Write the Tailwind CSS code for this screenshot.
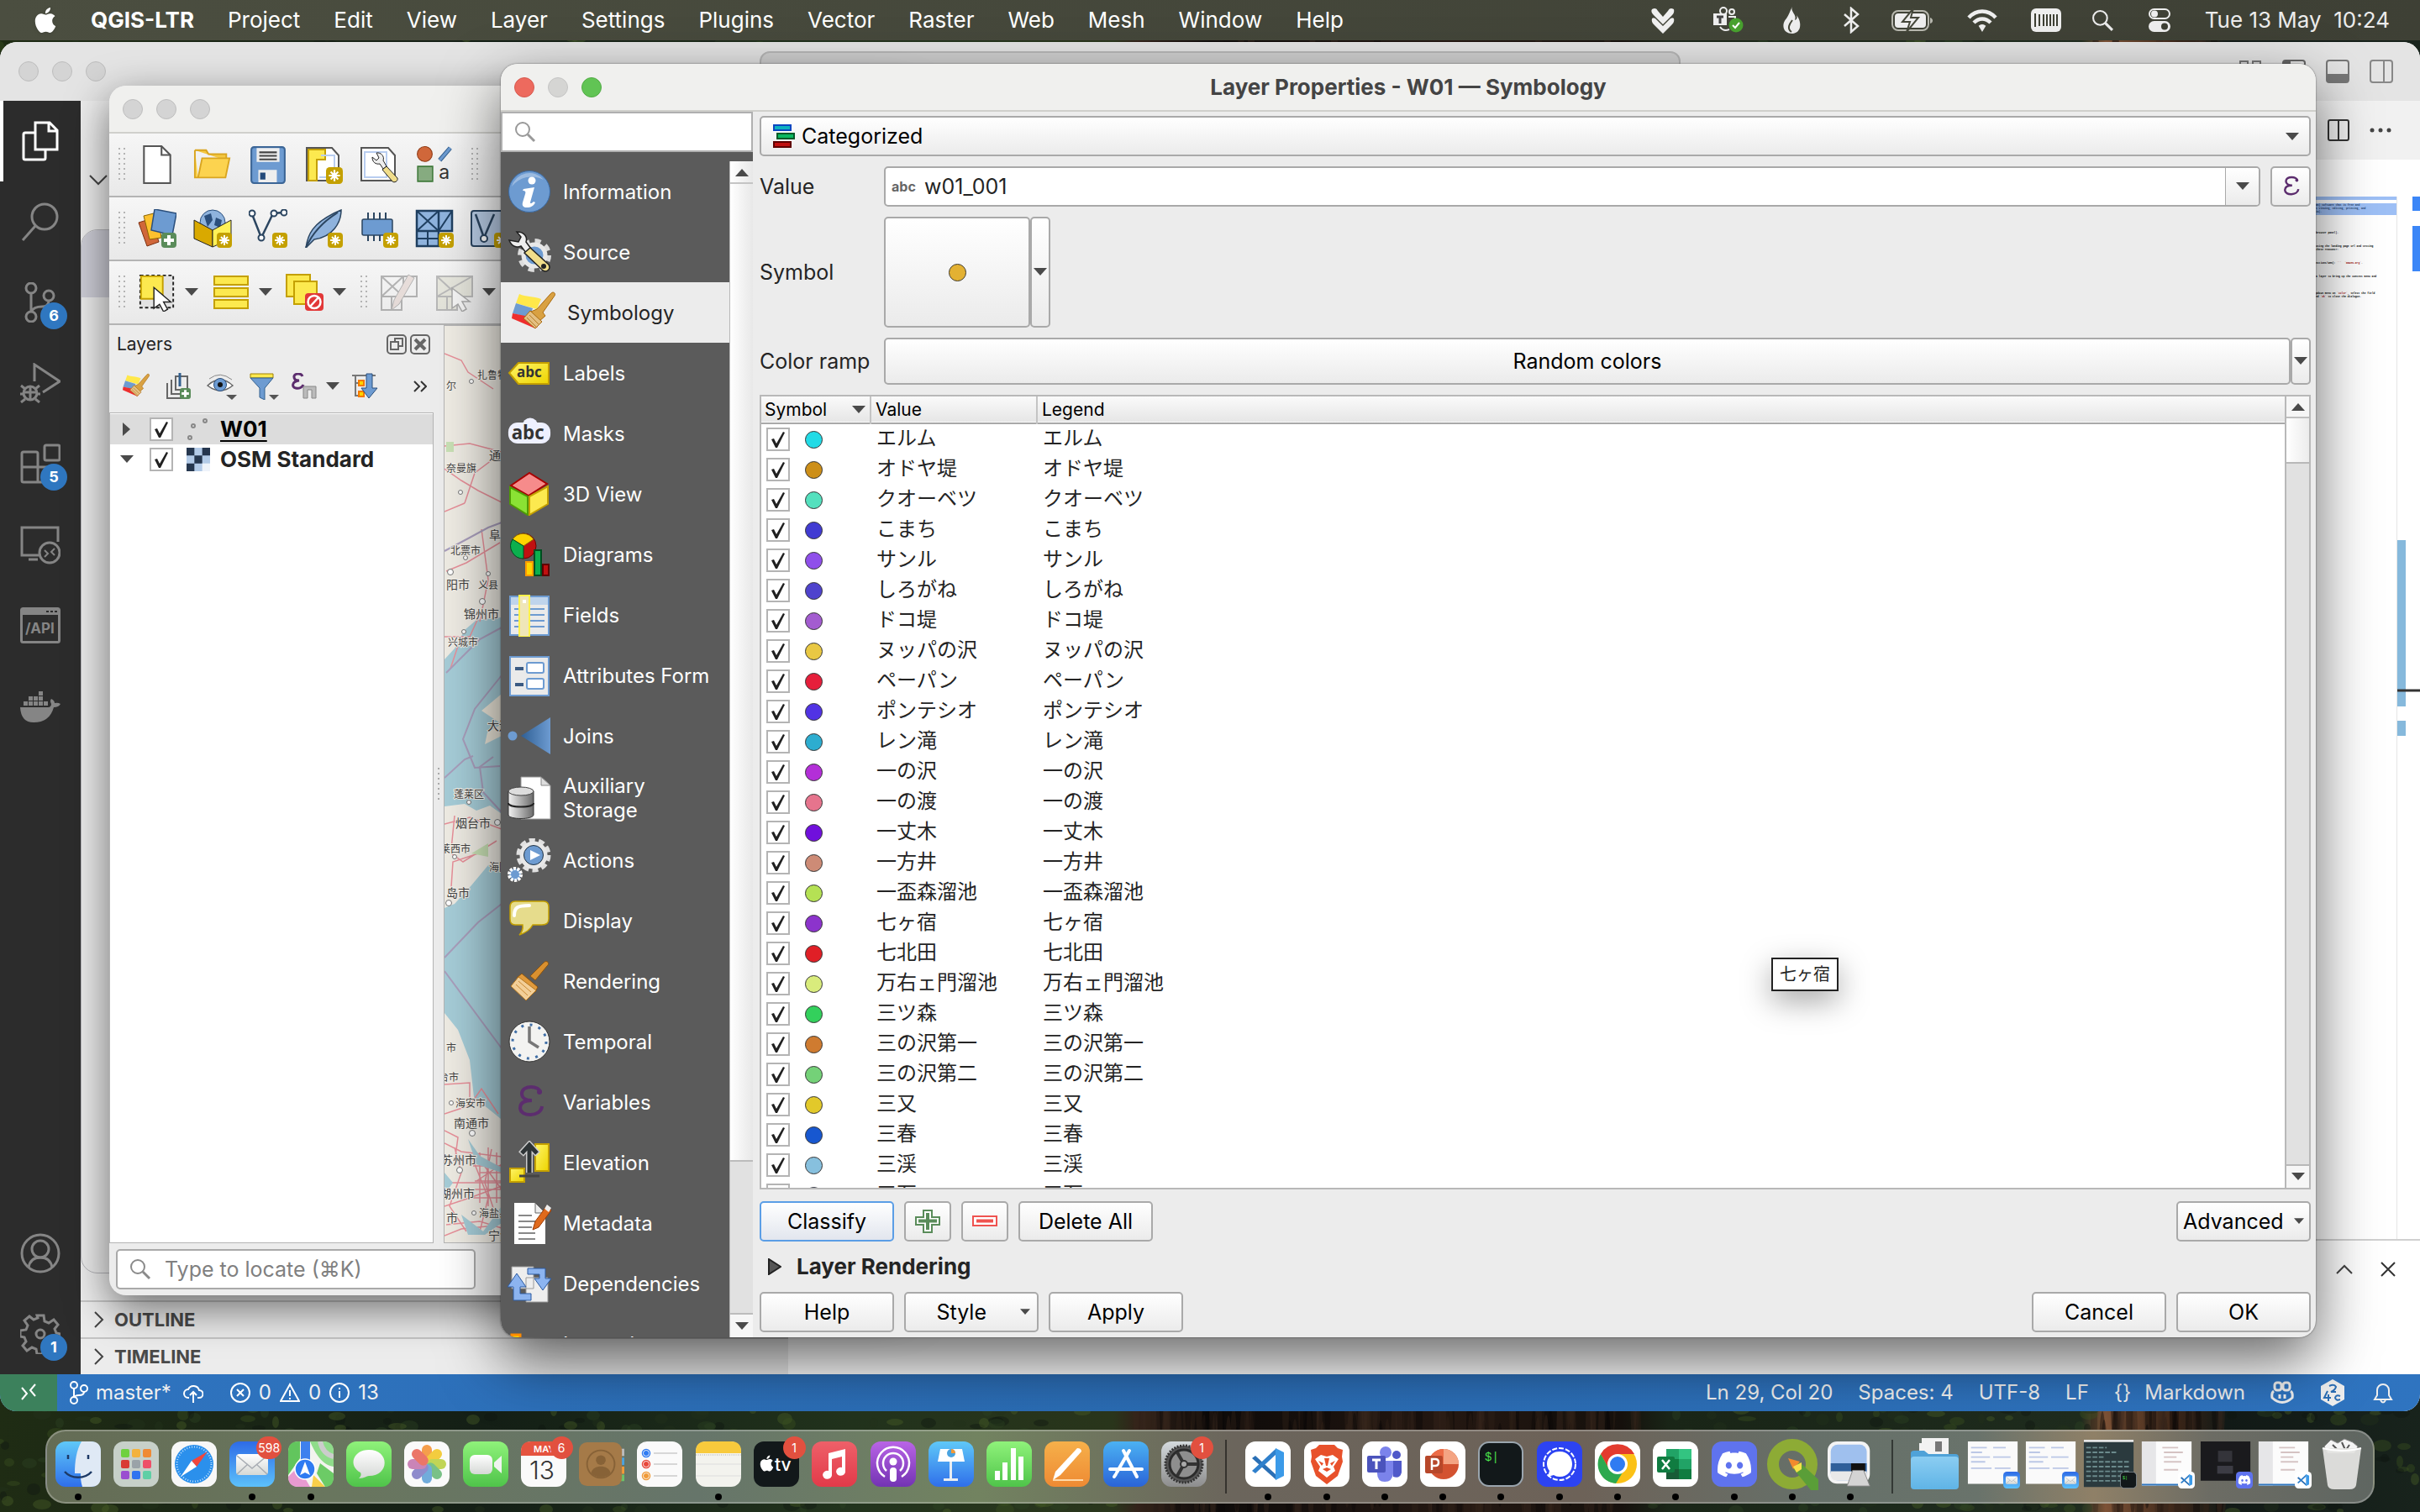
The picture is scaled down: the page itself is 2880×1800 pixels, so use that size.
<!DOCTYPE html>
<html lang="en">
<head>
<meta charset="utf-8">
<title>Layer Properties - W01 — Symbology</title>
<script src="https://cdn.jsdelivr.net/npm/@tailwindcss/browser@4"></script>
</head>
<body class="h-screen overflow-hidden bg-[#141c15] font-['Inter','Noto_Sans_CJK_JP',sans-serif] text-[25px] leading-8 text-[#242424]">

<!-- shared icon symbols -->
<svg class="absolute size-0" aria-hidden="true">
  <defs>
    <linearGradient id="g-blue" x1="0" y1="0" x2="1" y2="0"><stop offset="0" stop-color="#2f5f94"/><stop offset="1" stop-color="#6d9bd1"/></linearGradient>
    <linearGradient id="g-yel" x1="0" y1="0" x2="1" y2="1"><stop offset="0" stop-color="#fff568"/><stop offset="1" stop-color="#edd400"/></linearGradient>
    <linearGradient id="g-metal" x1="0" y1="0" x2="1" y2="0"><stop offset="0" stop-color="#f2f2f2"/><stop offset="1" stop-color="#6a6a6a"/></linearGradient>
    <linearGradient id="g-finder" x1="0" y1="0" x2="0" y2="1"><stop offset="0" stop-color="#5fc8f8"/><stop offset="1" stop-color="#2f6fea"/></linearGradient>
    <linearGradient id="g-mail" x1="0" y1="0" x2="0" y2="1"><stop offset="0" stop-color="#2e6be6"/><stop offset="1" stop-color="#5cc1fb"/></linearGradient>
    <linearGradient id="g-green" x1="0" y1="0" x2="0" y2="1"><stop offset="0" stop-color="#8ff27a"/><stop offset="1" stop-color="#4fc44a"/></linearGradient>
    <linearGradient id="g-red" x1="0" y1="0" x2="0" y2="1"><stop offset="0" stop-color="#ee6069"/><stop offset="1" stop-color="#e23a49"/></linearGradient>
    <linearGradient id="g-purple" x1="0" y1="0" x2="0" y2="1"><stop offset="0" stop-color="#b964e6"/><stop offset="1" stop-color="#7333b3"/></linearGradient>
    <linearGradient id="g-orange" x1="0" y1="0" x2="0" y2="1"><stop offset="0" stop-color="#f6b04a"/><stop offset="1" stop-color="#ee8a33"/></linearGradient>
    <linearGradient id="g-store" x1="0" y1="0" x2="0" y2="1"><stop offset="0" stop-color="#4bb1f3"/><stop offset="1" stop-color="#2a64d8"/></linearGradient>
    <linearGradient id="g-gray" x1="0" y1="0" x2="0" y2="1"><stop offset="0" stop-color="#d4dadd"/><stop offset="1" stop-color="#8d8d8d"/></linearGradient>
    <linearGradient id="g-white" x1="0" y1="0" x2="0" y2="1"><stop offset="0" stop-color="#ffffff"/><stop offset="1" stop-color="#d5d8d5"/></linearGradient>
    <linearGradient id="g-folder" x1="0" y1="0" x2="0" y2="1"><stop offset="0" stop-color="#8bcdf2"/><stop offset="1" stop-color="#5fb4e6"/></linearGradient>
  </defs>

  <symbol id="tri" viewBox="0 0 16 10"><path d="M0 0h16L8 9z" fill="#4a4a4a"/></symbol>
  <symbol id="check" viewBox="0 0 28 28"><path d="M6 14l3-1 3 6 8-14 2 1-9 18h-2z" fill="#202020"/></symbol>
  <symbol id="mag" viewBox="0 0 26 26"><circle cx="10" cy="10" r="8" fill="none" stroke="currentColor" stroke-width="2"/><path d="M16 16l8 8" stroke="currentColor" stroke-width="3"/></symbol>
  <symbol id="star" viewBox="0 0 18 18"><rect width="18" height="18" rx="4" fill="#c4a000"/><path d="M9 3v12M3 9h12M5 5l8 8M13 5l-8 8" stroke="#fff" stroke-width="2"/></symbol>
  <symbol id="plus" viewBox="0 0 18 18"><rect width="18" height="18" rx="4" fill="#5a8c5a"/><path d="M9 3v12M3 9h12" stroke="#fff" stroke-width="4"/></symbol>

  <!-- navigation icons -->
  <symbol id="n-info" viewBox="0 0 52 52"><circle cx="26" cy="26" r="24.500" fill="#6d9bd1" stroke="#3b6ba5"/><path d="M5 20a22 22 0 0 1 38-8A30 30 0 0 0 5 20z" fill="#9cbbe0"/><circle cx="29" cy="13" r="4.500" fill="#fff"/><path d="M19 23l13-2-5 18c0 2 2 1 4-1l2 1c-2 4-5 6-10 6-4 0-6-2-5-6l3-10c1-3 0-4-3-4z" fill="#fff"/></symbol>
  <symbol id="n-source" viewBox="0 0 52 52"><circle cx="32" cy="30" r="17" fill="none" stroke="#dcdcdc" stroke-width="6" stroke-dasharray="7 6.350"/><circle cx="32" cy="30" r="13" fill="#6d9bd1" stroke="#e8e8e8" stroke-width="5"/><path d="M2 12c3 8 9 9 14 7l6 8 6-5-6-8c2-6-2-12-11-12l5 6-3 6z" fill="#eee" stroke="#222" stroke-width="1.500"/><path d="M20 27l7-6 22 20c3 5-2 10-7 7z" fill="#f0dd8a" stroke="#222" stroke-width="1.500"/><circle cx="43" cy="43" r="3" fill="#222"/></symbol>
  <symbol id="n-sym" viewBox="0 0 52 52"><path d="M9 4c8 4 16 2 26 6l-5 12L5 15z" fill="#ffe84a"/><path d="M5 15l20 6-4 11-20-5z" fill="#6d9bd1"/><path d="M1 27l20 4 10 12-3 2L0 33z" fill="#ee2e2e"/><path d="M30 22L46 4c3-4 7-1 5 2L37 26l3 4-8 7-9-12z" fill="#d9a142" stroke="#a86a10"/><path d="M22 24l14 13-8 8L14 33z" fill="#e3bf82" stroke="#a86a10"/><path d="M18 32l11 11M21 29l11 11" stroke="#a86a10" stroke-width=".8"/></symbol>
  <symbol id="n-label" viewBox="0 0 52 52"><path d="M2 26l11-12h36v25H13z" fill="url(#g-yel)" stroke="#c4a000" stroke-width="2"/><text x="11" y="31" font-size="17" font-weight="700" fill="#333" font-family="Open Sans">abc</text></symbol>
  <symbol id="n-mask" viewBox="0 0 56 52"><rect x="1" y="12" width="54" height="27" rx="12" fill="#eef0ff"/><circle cx="29" cy="16" r="10" fill="#eef0ff"/><text x="5" y="34" font-size="24" font-weight="700" fill="#333" font-family="Open Sans">abc</text></symbol>
  <symbol id="n-3d" viewBox="0 0 52 52"><path d="M4 16L26 1l21 13-22 14z" fill="#f68b8b" stroke="#a80000" stroke-width="2"/><path d="M3 18l21 11v22L3 38z" fill="#8ae234" stroke="#4e9a06" stroke-width="2"/><path d="M48 17L26 29v22l22-13z" fill="#fce94f" stroke="#c4a000" stroke-width="2"/></symbol>
  <symbol id="n-diag" viewBox="0 0 52 52"><circle cx="19" cy="16" r="15" fill="#c01010" stroke="#700000"/><path d="M19 16L6 8a15 15 0 0 1 25 0z" fill="#ffd400" stroke="#8a6a00"/><path d="M19 16L6 8a15 15 0 0 0 13 23z" fill="#0cb04e" stroke="#004d20"/><path d="M22 35h8v16h-8z" fill="#ffd400" stroke="#ff9a00" stroke-width="2"/><path d="M32 21h8v30h-8z" fill="#0cb04e" stroke="#004d20" stroke-width="2"/><path d="M42 38h7v13h-7z" fill="#c01010" stroke="#600000" stroke-width="2"/></symbol>
  <symbol id="n-fields" viewBox="0 0 52 52"><path d="M3 4h46v46H3z" fill="#eaeaea" stroke="#6d9bd1" stroke-width="2"/><path d="M4 5h44v9H4z" fill="#bfd4ec"/><path d="M8 19h36M8 26h36M8 33h36M8 40h36" stroke="#6d9bd1" stroke-width="2"/><path d="M14 3h12v49H14z" fill="#efe6b8" stroke="#fff24a" stroke-width="2"/><path d="M18 8h4v4h-4z" fill="#fff"/></symbol>
  <symbol id="n-form" viewBox="0 0 52 52"><path d="M3 4h46v46H3z" fill="#eaeaea" stroke="#6d9bd1" stroke-width="2"/><path d="M9 18h10M9 37h10" stroke="#3b5a82" stroke-width="4"/><rect x="23" y="11" width="20" height="12" rx="2" fill="#fff" stroke="#6d9bd1" stroke-width="2"/><rect x="23" y="30" width="20" height="12" rx="2" fill="#fff" stroke="#6d9bd1" stroke-width="2"/></symbol>
  <symbol id="n-join" viewBox="0 0 52 52"><circle cx="6" cy="26" r="5.500" fill="#6d9bd1"/><path d="M16 26L51 4v44z" fill="url(#g-blue)"/></symbol>
  <symbol id="n-aux" viewBox="0 0 52 52"><path d="M16 1h24l11 10v40H16z" fill="#fff" stroke="#999"/><path d="M40 1v10h11z" fill="#ddd" stroke="#888"/><path d="M1 18v28c0 6 30 6 30 0V18z" fill="url(#g-metal)" stroke="#333"/><ellipse cx="16" cy="18" rx="15" ry="5" fill="#ddd" stroke="#444"/><path d="M1 32c0 6 30 6 30 0" fill="none" stroke="#222" stroke-width="2"/></symbol>
  <symbol id="n-act" viewBox="0 0 52 52"><circle cx="31" cy="20" r="18" fill="none" stroke="#e0e0e0" stroke-width="5" stroke-dasharray="7 4.300"/><circle cx="31" cy="20" r="14" fill="#6d9bd1" stroke="#e8e8e8" stroke-width="5"/><circle cx="31" cy="20" r="11.500" fill="none" stroke="#234"/><path d="M27 14l12 6-12 6z" fill="#fff"/><circle cx="9" cy="43" r="7" fill="#6d9bd1" stroke="#fff" stroke-width="4" stroke-dasharray="3 1.400"/></symbol>
  <symbol id="n-disp" viewBox="0 0 52 52"><path d="M9 3h34q6 0 6 7v14q0 7-8 7H30q-4 8-16 12 5-5 4-12H9q-6 0-6-7V10q0-7 6-7z" fill="#e6dc8c" stroke="#c4a000" stroke-width="1.500"/><path d="M8 20c0-10 4-12 18-12" fill="none" stroke="#fff" stroke-width="4" stroke-linecap="round"/></symbol>
  <symbol id="n-rend" viewBox="0 0 52 52"><path d="M27 20L43 4c4-4 8 1 4 4L33 25z" fill="#d9902f" stroke="#8a5410"/><path d="M17 17l19 16-3 6-22-17z" fill="#e09a3c" stroke="#8a5410"/><path d="M13 21l21 16-12 12L4 32z" fill="#f3cf98" stroke="#b57720"/><path d="M10 30l14 13M13 26l15 13" stroke="#c98a35"/></symbol>
  <symbol id="n-temp" viewBox="0 0 52 52"><circle cx="26" cy="26" r="24" fill="#f3f3f1" stroke="#333"/><circle cx="26" cy="26" r="20" fill="none" stroke="#3f6ea6" stroke-width="3" stroke-dasharray="3 7.470"/><path d="M26 8v18l11 7" fill="none" stroke="#777" stroke-width="3.500"/></symbol>
  <symbol id="n-var" viewBox="0 0 52 52"><path d="M39 15c0-9-22-10-22 1 0 5 5 8 12 8-9 0-14 3-14 9 0 11 25 11 26-2" fill="none" stroke="#5c2d6e" stroke-width="4"/><circle cx="38" cy="14" r="3" fill="#5c2d6e"/></symbol>
  <symbol id="n-elev" viewBox="0 0 52 52"><path d="M3 33h17v16H3z" fill="url(#g-yel)" stroke="#c4a000" stroke-width="2"/><path d="M33 4h16v32H33z" fill="url(#g-yel)" stroke="#c4a000" stroke-width="2"/><path d="M26 38V8M16 16L26 5l10 11" fill="none" stroke="#ccc" stroke-width="8"/><path d="M26 38V8M17 15L26 5l9 10" fill="none" stroke="#2e3436" stroke-width="5"/><path d="M14 42h24" stroke="#444" stroke-width="3"/></symbol>
  <symbol id="n-meta" viewBox="0 0 52 52"><path d="M8 2h25l12 12v37H8z" fill="#fff"/><path d="M33 2v12h12z" fill="#eee" stroke="#666"/><path d="M13 17h16M13 24h20M13 31h16M13 38h20M13 45h20" stroke="#888" stroke-width="2"/><path d="M30 34l3-10L47 5l5 6-15 20z" fill="#e06a1c" stroke="#9a3c06"/><path d="M44 9l3-5 5 4-3 5z" fill="#eee"/></symbol>
  <symbol id="n-dep" viewBox="0 0 52 52"><path d="M5 6h26v26H5zM22 19h26v29H22z" fill="#eee" stroke="#999"/><path d="M24 8h21v12h7L42 34 32 20h6v-5H24z" fill="#8cb4f0" stroke="#2c5aa0"/><path d="M28 46H7V30H0l11-16 11 16h-7v8h13z" fill="#8cb4f0" stroke="#2c5aa0"/></symbol>
  <symbol id="n-leg" viewBox="0 0 52 52"><path d="M5 15h10v12H5z" fill="#ffd400" stroke="#ff8c00" stroke-width="3"/><path d="M20 22h14" stroke="#999" stroke-width="8"/></symbol>

  <!-- toolbar icons -->
  <symbol id="t-new" viewBox="0 0 44 44"><path d="M7 1h20l10 10v32H7z" fill="#fff" stroke="#555" stroke-width="2"/><path d="M27 1v10h10" fill="none" stroke="#555" stroke-width="2"/></symbol>
  <symbol id="t-open" viewBox="0 0 48 44"><path d="M2 4h14l3 5h22v8" fill="#f5c842" stroke="#d9a520" stroke-width="2"/><path d="M2 4v34h38l5-24H11L6 38" fill="#fcd34f" stroke="#d9a520" stroke-width="2"/></symbol>
  <symbol id="t-save" viewBox="0 0 44 44"><rect x="3" y="2" width="38" height="41" rx="3" fill="#6d9bd1" stroke="#3b6596" stroke-width="2"/><path d="M9 3h26v16H9z" fill="#eee"/><path d="M12 8h20M12 12h20M12 16h20" stroke="#444" stroke-width="2"/><path d="M11 28h21v14H11z" fill="#eee"/><path d="M13 31h6v8h-6z" fill="#244a7a"/></symbol>
  <symbol id="t-layout" viewBox="0 0 46 46"><path d="M3 3h30l8 9v30H3z" fill="#fff" stroke="#555" stroke-width="2"/><path d="M5 5h20v12H15v25H5z" fill="#fce94f" stroke="#c4a000" stroke-width="2"/><path d="M20 12h16v26H18" fill="none" stroke="#b8cdf0" stroke-width="2"/><use href="#star" x="26" y="26" width="20" height="20"/></symbol>
  <symbol id="t-tool" viewBox="0 0 46 46"><path d="M2 3h32l8 9v30H2z" fill="#fff" stroke="#555" stroke-width="2"/><path d="M6 8h26v30H6z" fill="none" stroke="#b8cdf0" stroke-width="2"/><path d="M15 14c0 6 4 9 9 8l4 6 4-3-4-7c2-5-3-10-8-9l3 6-3 3z" fill="#eee" stroke="#222"/><path d="M27 29l5-4 13 14c1 4-4 6-6 4z" fill="#f0dd8a" stroke="#222"/></symbol>
  <symbol id="t-symb" viewBox="0 0 44 44"><circle cx="11" cy="10" r="8.500" fill="#d0673a" stroke="#8f3a14"/><path d="M28 17L40 3" stroke="#33608f" stroke-width="5"/><path d="M28 17L40 3" stroke="#6d9bd1" stroke-width="3"/><path d="M3 24h17v17H3z" fill="#86ab80" stroke="#3f7a3a" stroke-width="1.500"/><text x="27" y="38" font-size="22" fill="#333" font-family="Inter">a</text></symbol>
  <symbol id="t-layers" viewBox="0 0 46 46"><path d="M1 16l16-5 8 28-14 5z" fill="#d0673a" stroke="#7c3010"/><path d="M7 8l16-4 5 30-14 2z" fill="#fcc12f" stroke="#8a6400"/><path d="M20 0l26 5-5 26-25-6z" fill="#6d9bd1" stroke="#2b4f7c" stroke-width="1.500"/><use href="#plus" x="28" y="28" width="18" height="18"/></symbol>
  <symbol id="t-globe" viewBox="0 0 46 46"><circle cx="23" cy="16" r="15" fill="#8fb3dd" stroke="#2b4f7c"/><path d="M13 8l8-3 2 8-6 8zM27 10l7 3-2 9-7-3z" fill="#2b4f7c"/><path d="M1 13l22 12v20L1 35z" fill="#d9a900" stroke="#222"/><path d="M45 13L23 25v20l22-10z" fill="#fff157" stroke="#222"/><use href="#star" x="28" y="28" width="18" height="18"/></symbol>
  <symbol id="t-vec" viewBox="0 0 46 46"><path d="M4 6l11 28L29 5l12-1" fill="none" stroke="#2b4560" stroke-width="2.500"/><g fill="#fff" stroke="#2b4560" stroke-width="2"><circle cx="4" cy="5" r="3.500"/><circle cx="30" cy="5" r="3.500"/><circle cx="42" cy="4" r="3.500"/><circle cx="15" cy="34" r="3.500"/></g><use href="#star" x="28" y="28" width="18" height="18"/></symbol>
  <symbol id="t-feather" viewBox="0 0 46 46"><path d="M2 46c2-14 6-30 42-45 0 15-10 32-32 35z" fill="#8fb3dd" stroke="#2b4560" stroke-width="1.500"/><path d="M2 46C9 30 22 15 40 4" fill="none" stroke="#2b4560" stroke-width="2"/><use href="#star" x="28" y="28" width="18" height="18"/></symbol>
  <symbol id="t-chip" viewBox="0 0 46 46"><path d="M10 4v34M17 4v34M24 4v34M31 4v34" stroke="#2b4560" stroke-width="2"/><rect x="3" y="12" width="36" height="19" rx="2" fill="#6d9bd1" stroke="#2b4560" stroke-width="1.500"/><use href="#star" x="28" y="28" width="18" height="18"/></symbol>
  <symbol id="t-mesh" viewBox="0 0 46 46"><path d="M2 2h26v24H2zM28 2h16v24H28zM2 26h26v18H2z" fill="#8fb3dd" stroke="#1f3f60" stroke-width="2.500"/><path d="M2 2l26 24M28 2L2 26M28 26L44 2M15 26v18M2 35h26" stroke="#1f3f60" stroke-width="2"/><use href="#star" x="28" y="28" width="18" height="18"/></symbol>
  <symbol id="t-vecb" viewBox="0 0 46 46"><rect x="1" y="2" width="42" height="42" rx="3" fill="#b9cde6" stroke="#2b4560" stroke-width="2"/><path d="M6 6l10 28L28 6" fill="none" stroke="#2b4560" stroke-width="2.500"/><circle cx="16" cy="35" r="4" fill="#fff" stroke="#2b4560" stroke-width="2"/><use href="#star" x="28" y="28" width="18" height="18"/></symbol>
  <symbol id="t-sel" viewBox="0 0 48 48"><path d="M3 3h41v40H3z" fill="#e2e2e2" stroke="#222" stroke-width="2" stroke-dasharray="4 3"/><path d="M4 4h27v28H4z" fill="#fce94f" stroke="#c4a000" stroke-width="2"/><path d="M20 18v26l7-5 5 9 5-3-5-9h9z" fill="#fff" stroke="#222" stroke-width="1.500"/></symbol>
  <symbol id="t-rows" viewBox="0 0 46 46"><path d="M3 4h40v10H3zM3 18h40v10H3zM3 32h40v10H3z" fill="#fce94f" stroke="#c4a000" stroke-width="2"/></symbol>
  <symbol id="t-desel" viewBox="0 0 46 46"><path d="M1 2h28v26H1z" fill="#fce94f" stroke="#c4a000" stroke-width="2"/><path d="M10 10h27v27H10z" fill="#fce94f" stroke="#c4a000" stroke-width="2"/><rect x="23" y="24" width="22" height="21" rx="4" fill="#e23838"/><circle cx="34" cy="34.500" r="7.500" fill="none" stroke="#fff" stroke-width="2.500"/><path d="M29 40l10-11" stroke="#fff" stroke-width="2.500"/></symbol>
  <symbol id="t-edit" viewBox="0 0 46 46"><g opacity=".4"><path d="M2 4h42v24H2zM2 28h24v16H2zM2 4l26 24M28 4L2 28M14 28v16M28 4v24" fill="none" stroke="#555" stroke-width="2"/><path d="M14 44l3-12L34 2l7 4-18 31z" fill="#d9c0b8" stroke="#555"/></g></symbol>
  <symbol id="t-msel" viewBox="0 0 46 46"><g opacity=".45"><path d="M2 4h42v24H2zM2 28h24v16H2zM2 4l26 24M44 4L2 28M14 28v16" fill="#d8d8c4" stroke="#777" stroke-width="2"/><path d="M20 18v24l7-5 5 9 5-3-5-9h9z" fill="#fff" stroke="#555" stroke-width="1.500"/></g></symbol>

  <!-- dock icons -->
  <symbol id="d-finder" viewBox="0 0 54 54"><rect width="54" height="54" rx="12" fill="url(#g-finder)"/><path d="M31 0h11q12 0 12 12v30q0 12-12 12H32c-2-6-2-10-2-16h-7c0-14 2-28 8-38z" fill="#dfe9f5"/><path d="M15 16v5M39 16v5" stroke="#1d3a66" stroke-width="2.500"/><path d="M11 36c8 9 24 9 32 0" fill="none" stroke="#1d3a66" stroke-width="2.500"/></symbol>
  <symbol id="d-launch" viewBox="0 0 54 54"><rect width="54" height="54" rx="12" fill="#c7d0c9"/><g><rect x="9" y="9" width="10" height="10" rx="2" fill="#6fd13f"/><rect x="22" y="9" width="10" height="10" rx="2" fill="#f3b23c"/><rect x="35" y="9" width="10" height="10" rx="2" fill="#ef8a35"/><rect x="9" y="22" width="10" height="10" rx="2" fill="#d93a34"/><rect x="22" y="22" width="10" height="10" rx="2" fill="#9aa3a8"/><rect x="35" y="22" width="10" height="10" rx="2" fill="#ee4f68"/><rect x="9" y="35" width="10" height="10" rx="2" fill="#9a4fd0"/><rect x="22" y="35" width="10" height="10" rx="2" fill="#2f74f0"/><rect x="35" y="35" width="10" height="10" rx="2" fill="#5ecfa5"/></g></symbol>
  <symbol id="d-safari" viewBox="0 0 54 54"><rect width="54" height="54" rx="12" fill="#f7f7f7"/><circle cx="27" cy="27" r="23" fill="#2b90ec"/><circle cx="27" cy="27" r="20.500" fill="none" stroke="#bfe0ff" stroke-width="2" stroke-dasharray="1 2"/><path d="M43 12L24 23l6 7z" fill="#f0463c"/><path d="M11 42l13-19 6 7z" fill="#fff"/></symbol>
  <symbol id="d-mail" viewBox="0 0 54 54"><rect width="54" height="54" rx="12" fill="url(#g-mail)"/><rect x="8" y="15" width="38" height="25" rx="4" fill="url(#g-white)"/><path d="M9 17l18 15 18-15M9 39l13-12M45 39L32 27" fill="none" stroke="#a8adb3" stroke-width="1.500"/></symbol>
  <symbol id="d-maps" viewBox="0 0 54 54"><rect width="54" height="54" rx="12" fill="#f4f4f0"/><path d="M26 0h16q12 0 12 12v18C40 28 32 14 26 0z" fill="#8fdc8a"/><path d="M38 0c2 10 8 16 16 18" fill="none" stroke="#ccc" stroke-width="6"/><path d="M0 12Q0 0 12 0h2v20L0 40z" fill="#62c55d"/><path d="M0 42l12-12 14 24H12Q0 54 0 42z" fill="#e79ad0"/><path d="M30 40l14 14H28z" fill="#f8cf4a"/><path d="M54 42q0 12-10 12L34 38l4-12 16 12z" fill="#6ccb66"/><path d="M15 0h11v30H15z" fill="#3e80ee"/><circle cx="20" cy="33" r="12" fill="#2f7bf2" stroke="#fff" stroke-width="1.500"/><path d="M20 24l6 16-6-3-6 3z" fill="#fff"/></symbol>
  <symbol id="d-msg" viewBox="0 0 54 54"><rect width="54" height="54" rx="12" fill="url(#g-green)"/><path d="M27 10c25 0 25 31 0 31-3 0-5 3-12 3 3-3 3-5 2-7C2 29 8 10 27 10z" fill="url(#g-white)"/></symbol>
  <symbol id="d-photos" viewBox="0 0 54 54"><rect width="54" height="54" rx="12" fill="#fafafa"/><g opacity=".85"><rect x="21" y="4" width="12" height="23" rx="6" fill="#f58f2d"/><rect x="21" y="4" width="12" height="23" rx="6" fill="#f2c51f" transform="rotate(45 27 27)"/><rect x="21" y="4" width="12" height="23" rx="6" fill="#b8cf3a" transform="rotate(90 27 27)"/><rect x="21" y="4" width="12" height="23" rx="6" fill="#63b873" transform="rotate(135 27 27)"/><rect x="21" y="4" width="12" height="23" rx="6" fill="#5a9fd6" transform="rotate(180 27 27)"/><rect x="21" y="4" width="12" height="23" rx="6" fill="#7d79c4" transform="rotate(225 27 27)"/><rect x="21" y="4" width="12" height="23" rx="6" fill="#c270ac" transform="rotate(270 27 27)"/><rect x="21" y="4" width="12" height="23" rx="6" fill="#e9604f" transform="rotate(315 27 27)"/></g></symbol>
  <symbol id="d-face" viewBox="0 0 54 54"><rect width="54" height="54" rx="12" fill="url(#g-green)"/><rect x="8" y="16" width="27" height="23" rx="6" fill="url(#g-white)"/><path d="M37 25l9-8v21l-9-8z" fill="#f0f3f0"/></symbol>
  <symbol id="d-cal" viewBox="0 0 54 54"><rect width="54" height="54" rx="12" fill="#fafafa"/><path d="M0 17v-5Q0 0 12 0h30q12 0 12 12v5z" fill="#e5533f"/><text x="15" y="13" font-size="11" font-weight="600" fill="#fff" font-family="Inter">MAY</text><text x="10" y="45" font-size="30" fill="#333" font-family="Inter" font-weight="300">13</text></symbol>
  <symbol id="d-cont" viewBox="0 0 56 54"><path d="M50 8h6v9h-6z" fill="#bbb"/><path d="M50 19h6v9h-6z" fill="#4aa3e0"/><path d="M50 30h6v9h-6z" fill="#f29a38"/><path d="M50 40h6v8h-6z" fill="#6cc26a"/><rect width="53" height="54" rx="10" fill="#a57a48"/><circle cx="27" cy="27" r="17" fill="none" stroke="#876237" stroke-width="2"/><circle cx="27" cy="22" r="6" fill="#876237"/><path d="M15 38c2-11 22-11 24 0-6 7-18 7-24 0z" fill="#876237"/></symbol>
  <symbol id="d-rem" viewBox="0 0 54 54"><rect width="54" height="54" rx="12" fill="#fafafa"/><path d="M20 14h28M20 27h28M20 41h28" stroke="#ccc" stroke-width="1.500"/><g fill="none" stroke-width="1.500"><circle cx="11" cy="14" r="4.500" stroke="#2f7bf2"/><circle cx="11" cy="27" r="4.500" stroke="#e8483b"/><circle cx="11" cy="41" r="4.500" stroke="#f09a38"/></g><circle cx="11" cy="14" r="3" fill="#2f7bf2"/><circle cx="11" cy="27" r="3" fill="#e8483b"/><circle cx="11" cy="41" r="3" fill="#f09a38"/></symbol>
  <symbol id="d-notes" viewBox="0 0 54 54"><rect width="54" height="54" rx="12" fill="#f3f3ee"/><path d="M0 14v-2Q0 0 12 0h30q12 0 12 12v2z" fill="#f8ca3c"/><path d="M0 16h54" stroke="#aaa" stroke-dasharray="1 1.500"/><path d="M0 27h54M0 41h54" stroke="#ddd"/></symbol>
  <symbol id="d-tv" viewBox="0 0 54 54"><rect width="54" height="54" rx="12" fill="#12181a"/><use href="#apple" x="6" y="15" width="19" height="22"/><text x="25" y="35" font-size="21" fill="#fff" font-family="Inter" font-weight="500">tv</text></symbol>
  <symbol id="d-music" viewBox="0 0 54 54"><rect width="54" height="54" rx="12" fill="url(#g-red)"/><path d="M20 14l20-5v26a5.500 5 0 1 1-4-4V18l-12 3v18a5.500 5 0 1 1-4-4z" fill="#fff"/></symbol>
  <symbol id="d-pod" viewBox="0 0 54 54"><rect width="54" height="54" rx="12" fill="url(#g-purple)"/><g fill="none" stroke="#fff" stroke-width="2.500"><path d="M17 42a19 19 0 1 1 20 0"/><path d="M19 35a12 12 0 1 1 16 0"/></g><circle cx="27" cy="24" r="4.500" fill="#fff"/><rect x="23" y="31" width="8" height="17" rx="4" fill="#fff"/></symbol>
  <symbol id="d-key" viewBox="0 0 54 54"><rect width="54" height="54" rx="12" fill="url(#g-finder)"/><path d="M14 9h26l3 15H11z" fill="#fff"/><circle cx="27" cy="14" r="5" fill="#4aa3e0"/><path d="M27 14V9a5 5 0 0 1 5 5z" fill="#f29a38"/><path d="M25 24h3v20h-3zM18 44h17v3H18z" fill="#e8edf2"/></symbol>
  <symbol id="d-num" viewBox="0 0 54 54"><rect width="54" height="54" rx="12" fill="url(#g-green)"/><path d="M10 35h6v11h-6zM19 25h6v21h-6zM29 8h6v38h-6zM38 18h6v28h-6z" fill="#fff"/></symbol>
  <symbol id="d-pages" viewBox="0 0 54 54"><rect width="54" height="54" rx="12" fill="url(#g-orange)"/><path d="M10 46l3-10L39 8q5 0 5 4L19 40z" fill="#fff"/><path d="M10 46h36" stroke="#ffd9a8" stroke-width="2"/></symbol>
  <symbol id="d-store" viewBox="0 0 54 54"><rect width="54" height="54" rx="12" fill="url(#g-store)"/><path d="M31 11L16 37M24 11l16 31M8 33h38M13 42l2-3" stroke="#fff" stroke-width="4" stroke-linecap="round"/></symbol>
  <symbol id="d-set" viewBox="0 0 54 54"><rect width="54" height="54" rx="12" fill="url(#g-gray)"/><circle cx="27" cy="27" r="22" fill="#555" stroke="#333" stroke-width="3" stroke-dasharray="2 1.500"/><circle cx="27" cy="27" r="17" fill="#8e8e8e" stroke="#2b2b2b" stroke-width="3"/><path d="M27 27h16M27 27l-8-14M27 27l-8 14" stroke="#333" stroke-width="4"/><circle cx="27" cy="27" r="4" fill="#aaa" stroke="#333" stroke-width="2"/></symbol>
  <symbol id="d-code" viewBox="0 0 54 54"><rect width="54" height="54" rx="12" fill="#fff"/><path d="M8 20l4-3 25 23v6z" fill="#2a6fb5"/><path d="M8 35l4 3 25-23V8z" fill="#2f80cc"/><path d="M36 8l10 5v28l-10 5z" fill="#3b9ae8"/></symbol>
  <symbol id="d-brave" viewBox="0 0 54 54"><rect width="54" height="54" rx="12" fill="#fff"/><path d="M18 4h18l4 4 6 2-1 8 1 6-6 17-13 10-13-10L8 24l1-6-1-8 6-2z" fill="#e8512b"/><path d="M20 16l7 2 7-2 7 5-6 9 2 5-10 8-10-8 2-5-6-9z" fill="#fff"/><path d="M24 20h6l-2 9h-2zM17 23l6 3-2 3zM37 23l-6 3 2 3zM22 33l5-2 5 2-5 3z" fill="#e8512b"/></symbol>
  <symbol id="d-teams" viewBox="0 0 54 54"><rect width="54" height="54" rx="12" fill="#fff"/><circle cx="28" cy="13" r="7" fill="#7b83eb"/><circle cx="41" cy="16" r="5" fill="#5059c9"/><path d="M34 23h13v14q-2 8-10 5z" fill="#5059c9"/><path d="M18 23h19v15q-1 10-10 10t-9-10z" fill="#7b83eb"/><rect x="6" y="17" width="22" height="20" rx="2" fill="#4b53bc"/><path d="M12 22h10M17 22v11" stroke="#fff" stroke-width="3"/></symbol>
  <symbol id="d-ppt" viewBox="0 0 54 54"><rect width="54" height="54" rx="12" fill="#fff"/><circle cx="28" cy="27" r="18" fill="#d35230"/><path d="M28 9a18 18 0 0 1 18 18H28z" fill="#f4a483"/><path d="M28 9v18H10a18 18 0 0 1 18-18z" fill="#ed6c47"/><rect x="6" y="17" width="21" height="21" rx="2" fill="#b7472a"/><path d="M14 34V21h4q4 0 4 4t-4 4h-4" fill="none" stroke="#fff" stroke-width="2.500"/></symbol>
  <symbol id="d-term" viewBox="0 0 54 54"><rect x="1" y="1" width="52" height="52" rx="12" fill="#12181a" stroke="#9aa5ae" stroke-width="2"/><text x="8" y="23" font-size="14" fill="#4be04b" font-family="Liberation Mono">$|</text></symbol>
  <symbol id="d-signal" viewBox="0 0 54 54"><rect width="54" height="54" rx="12" fill="#2c43f2"/><path d="M27 12c20 0 20 30 0 30-3 0-5-1-7-2l-7 2 2-7C8 26 14 12 27 12z" fill="#fff"/><circle cx="27" cy="27" r="19" fill="none" stroke="#fff" stroke-width="2" stroke-dasharray="6 2"/></symbol>
  <symbol id="d-chrome" viewBox="0 0 54 54"><rect width="54" height="54" rx="12" fill="#fff"/><circle cx="27" cy="27" r="23" fill="#fbc116"/><path d="M7 15a23 23 0 0 1 40 0H27L17 33z" fill="#e33b2e"/><path d="M7 15a23 23 0 0 0 18 35l11-18-19 1z" fill="#2da94f"/><circle cx="27" cy="27" r="10.500" fill="#2f7bf2" stroke="#fff" stroke-width="3"/></symbol>
  <symbol id="d-excel" viewBox="0 0 54 54"><rect width="54" height="54" rx="12" fill="#fff"/><path d="M16 9h30v36H16z" fill="#21a366"/><path d="M31 9h15v12H31z" fill="#33c481"/><path d="M16 21h15v12H16zM31 33h15v12H31z" fill="#107c41"/><path d="M16 33h15v12H16z" fill="#185c37"/><rect x="5" y="18" width="21" height="19" rx="2" fill="#107c41"/><path d="M11 22l9 11M20 22l-9 11" stroke="#fff" stroke-width="2.500"/></symbol>
  <symbol id="discordmark" viewBox="0 0 24 24"><path d="M20.317 4.3698a19.7913 19.7913 0 00-4.8851-1.5152.0741.0741 0 00-.0785.0371c-.211.3753-.4447.8648-.6083 1.2495-1.8447-.2762-3.68-.2762-5.4868 0-.1636-.3933-.4058-.8742-.6177-1.2495a.077.077 0 00-.0785-.037 19.7363 19.7363 0 00-4.8852 1.515.0699.0699 0 00-.0321.0277C.5334 9.0458-.319 13.5799.0992 18.0578a.0824.0824 0 00.0312.0561c2.0528 1.5076 4.0413 2.4228 5.9929 3.0294a.0777.0777 0 00.0842-.0276c.4616-.6304.8731-1.2952 1.226-1.9942a.076.076 0 00-.0416-.1057c-.6528-.2476-1.2743-.5495-1.8722-.8923a.077.077 0 01-.0076-.1277c.1258-.0943.2517-.1923.3718-.2914a.0743.0743 0 01.0776-.0105c3.9278 1.7933 8.18 1.7933 12.0614 0a.0739.0739 0 01.0785.0095c.1202.099.246.1981.3728.2924a.077.077 0 01-.0066.1276 12.2986 12.2986 0 01-1.873.8914.0766.0766 0 00-.0407.1067c.3604.698.7719 1.3628 1.225 1.9932a.076.076 0 00.0842.0286c1.961-.6067 3.9495-1.5219 6.0023-3.0294a.077.077 0 00.0313-.0552c.5004-5.177-.8382-9.6739-3.5485-13.6604a.061.061 0 00-.0312-.0286zM8.02 15.3312c-1.1825 0-2.1569-1.0857-2.1569-2.419 0-1.3332.9555-2.4189 2.157-2.4189 1.2108 0 2.1757 1.0952 2.1568 2.419 0 1.3332-.9555 2.4189-2.1569 2.4189zm7.9748 0c-1.1825 0-2.1569-1.0857-2.1569-2.419 0-1.3332.9554-2.4189 2.1569-2.4189 1.2108 0 2.1757 1.0952 2.1568 2.419 0 1.3332-.946 2.4189-2.1568 2.4189Z" fill="#fff"/></symbol>
  <symbol id="d-discord" viewBox="0 0 54 54"><rect width="54" height="54" rx="12" fill="#5f73ee"/><use href="#discordmark" x="7" y="7" width="40" height="40"/></symbol>
  <symbol id="d-qgis" viewBox="-4 -4 62 62"><circle cx="27" cy="27" r="23" fill="none" stroke="#8dab35" stroke-width="14"/><path d="M27 31l9-6 24 22v11H49z" fill="#5a9e38"/><path d="M22 20l14 4-8 9z" fill="#f08a2e"/><path d="M28 30l10-5v8l-6 4z" fill="#f6e04a"/></symbol>
  <symbol id="d-prev" viewBox="0 0 58 58"><rect width="54" height="54" rx="12" fill="#f4f4f4"/><rect x="4" y="4" width="46" height="46" rx="9" fill="#9fc0ee"/><path d="M4 28h46v12H4z" fill="#2f5f9a"/><path d="M4 38h46v4q0 8-8 8H12q-8 0-8-8z" fill="#e9e9e9"/><path d="M30 28h18v10H30z" fill="#111"/><path d="M32 37h14l8 20H25z" fill="#d4d4d4" stroke="#888"/></symbol>
  <symbol id="d-fold" viewBox="0 0 58 62"><path d="M11 6h18v20H11zM14 0h32v20H14z" fill="#f2f2f2"/><path d="M30 4h8v12h-8z" fill="#777"/><path d="M1 18q0-3 4-3h12l5 4h32q4 0 4 4v30H1z" fill="#4fa2d8"/><rect x="1" y="22" width="57" height="39" rx="4" fill="url(#g-folder)"/></symbol>
  <symbol id="w-light" viewBox="0 0 64 66"><path d="M0 2h63v54H0z" fill="#fafafa"/><path d="M4 10h20M4 16h14M4 22h24M4 28h18M4 36h26M32 10h16M32 22h22M34 36h20" stroke="#bcc8e6" stroke-width="2"/></symbol>
  <symbol id="w-dark" viewBox="0 0 64 66"><path d="M0 0h63v60H0z" fill="#2b3a3e"/><path d="M0 0h63v3H0z" fill="#e8e8e8"/><path d="M3 10h26M3 16h40M3 22h22M3 28h54M3 34h54M3 40h54M3 46h54M3 52h54" stroke="#6b8a8c" stroke-width="2" stroke-dasharray="6 2"/></symbol>
  <symbol id="w-black" viewBox="0 0 64 66"><path d="M0 2h63v50H0z" fill="#1a1a1d"/><path d="M22 14h18v14H22z" fill="#34343a"/><path d="M21 33h20v10H21z" fill="#3c3c44"/></symbol>
  <symbol id="w-code" viewBox="0 0 64 66"><path d="M0 2h63v56H0z" fill="#fcfcfc"/><path d="M0 2h18v56H0z" fill="#e6e6e8"/><path d="M0 56h63v2H0z" fill="#2f77c0"/><path d="M26 10h20M28 16h24M28 22h16M28 28h22M28 38h18" stroke="#d5c3c3" stroke-width="2"/></symbol>
  <symbol id="d-trash" viewBox="0 0 50 62"><path d="M4 10l8-8 8 4 8-5 10 4 6 5-4 8H8z" fill="#f4f4f4" stroke="#888"/><path d="M14 8l5 5M25 5l4 9M34 8l-4 6" stroke="#555" stroke-width="2"/><path d="M2 12h46l-6 44q-1 5-8 5H16q-7 0-8-5z" fill="#e4e4e2" fill-opacity=".93"/><path d="M2 12q23 6 46 0" fill="none" stroke="#fff" stroke-width="2"/></symbol>
  <symbol id="apple" viewBox="0 0 24 24"><path fill="#fff" d="M12.152 6.896c-.948 0-2.415-1.078-3.96-1.04-2.04.027-3.91 1.183-4.961 3.014-2.117 3.675-.546 9.103 1.519 12.09 1.013 1.454 2.208 3.09 3.792 3.039 1.52-.065 2.09-.987 3.935-.987 1.831 0 2.35.987 3.96.948 1.637-.026 2.676-1.48 3.676-2.948 1.156-1.688 1.636-3.325 1.662-3.415-.039-.013-3.182-1.221-3.22-4.857-.026-3.04 2.48-4.494 2.597-4.559-1.429-2.09-3.623-2.324-4.39-2.376-2-.156-3.675 1.09-4.61 1.09zM15.53 3.83c.843-1.012 1.4-2.427 1.245-3.83-1.207.052-2.662.805-3.532 1.818-.78.896-1.454 2.338-1.273 3.714 1.338.104 2.715-.688 3.559-1.701"/></symbol>
</svg>

<div class="relative h-full w-full overflow-hidden">

  <!-- wallpaper -->
  <svg id="wallpaper" class="absolute inset-0 h-full w-full" viewBox="0 0 2880 1800" preserveAspectRatio="none" aria-hidden="true">
    <defs><linearGradient id="wall" x1="0" x2="1" y1="0" y2="0">
      <stop offset="0" stop-color="#1f2c14"/><stop offset=".2" stop-color="#141f16"/><stop offset=".35" stop-color="#22331d"/><stop offset=".46" stop-color="#2a361c"/><stop offset=".47" stop-color="#33231a"/><stop offset=".5" stop-color="#0e0b0a"/><stop offset=".6" stop-color="#241812"/><stop offset=".67" stop-color="#16110d"/><stop offset=".69" stop-color="#1a2618"/><stop offset=".86" stop-color="#1f2c1e"/><stop offset=".87" stop-color="#7d5236"/><stop offset=".9" stop-color="#3a2518"/><stop offset=".92" stop-color="#121a17"/><stop offset="1" stop-color="#18231c"/></linearGradient></defs>
    <rect width="2880" height="1800" fill="url(#wall)"/>
    <g id="leaves"></g>
  </svg>

  <!-- menu bar -->
  <header class="absolute inset-x-0 top-0 flex h-12 items-center bg-linear-to-r from-[#4b4e40] to-[#3e4035] text-[26px] text-white">
    <svg class="ml-[39px] size-[30px] drop-shadow"><use href="#apple"/></svg>
    <nav class="ml-[39px] flex items-center gap-10" aria-label="Application menu">
      <button class="font-bold">QGIS-LTR</button><button>Project</button><button>Edit</button><button>View</button><button>Layer</button><button>Settings</button><button>Plugins</button><button>Vector</button><button>Raster</button><button>Web</button><button>Mesh</button><button>Window</button><button>Help</button>
    </nav>
    <div class="ml-auto flex items-center pr-9 text-[#ececec]">
      <svg class="mr-10 w-8 h-8" viewBox="0 0 32 32" fill="#f0f0f0"><path d="M3 3q5-3 7 2l6 7 6-7q2-5 7-2 1 4-2 7L16 21 5 10Q1 6 3 3z"/><path d="M3 14q3-2 6 2l7 7 7-7q3-4 6-2 1 4-2 7L16 32 5 21q-3-3-2-7z"/></svg>
      <svg class="mr-11 w-10 h-8" viewBox="0 0 40 32"><path d="M4 8h16v14H4z" fill="#eee"/><path d="M8 12h8M12 12v8" stroke="#444" stroke-width="3"/><circle cx="16" cy="5" r="4" fill="none" stroke="#eee" stroke-width="2"/><circle cx="26" cy="6" r="3" fill="none" stroke="#eee" stroke-width="2"/><path d="M22 12h8v8M12 24q4 6 11 3" fill="none" stroke="#eee" stroke-width="2"/><circle cx="31" cy="22" r="8.500" fill="#48a12f"/><path d="M27 22l3 3 5-6" fill="none" stroke="#fff" stroke-width="2"/></svg>
      <svg class="mr-11 w-7 h-8" viewBox="0 0 28 32"><path d="M14 0c-3 6 6 9 3 16 3-1 3-4 2-6 6 7 7 21-5 22C2 32 1 20 7 14c3-4 4-9 7-14z" fill="#eee"/><path d="M13 30c-6-4-2-10 1-14" stroke="#454739" fill="none" stroke-width="2"/></svg>
      <svg class="mr-9 w-6 h-8" viewBox="0 0 24 32"><path d="M4 9l16 14-8 7V2l8 7L4 23" fill="none" stroke="#eee" stroke-width="2.500"/></svg>
      <svg class="mr-10 w-[50px] h-7" viewBox="0 0 50 28"><rect x="1" y="3" width="43" height="23" rx="7" fill="none" stroke="#b9b9b0" stroke-width="2"/><rect x="4" y="6" width="37" height="17" rx="4" fill="#eee"/><path d="M46 11v7q3-1 3-3.500T46 11z" fill="#b9b9b0"/><path d="M26 0L13 16h9l-4 12 14-17h-9z" fill="#eee" stroke="#45473a" stroke-width="2"/></svg>
      <svg class="mr-10 w-9 h-7" viewBox="0 0 36 28" fill="none" stroke="#eee" stroke-width="4.500"><path d="M2 11c9-10 23-10 32 0"/><path d="M8 17c6-6 14-6 20 0"/><path d="M15 21q3-2 6 0l-3 5z" fill="#eee" stroke-width="2"/></svg>
      <svg class="mr-9 w-9 h-7" viewBox="0 0 36 28"><rect width="36" height="28" rx="6" fill="#eee"/><path d="M5 6v16M10 7v14M15 7v14M19 7v14M23 7v14M27 7v14M31 7v14" stroke="#3e4034" stroke-width="2"/></svg>
      <svg class="mr-10 size-[27px]"><use href="#mag"/></svg>
      <svg class="mr-10 w-7 h-7" viewBox="0 0 28 28"><rect x="2" y="1" width="24" height="11" rx="5.500" fill="none" stroke="#eee" stroke-width="2"/><circle cx="8" cy="6.500" r="4" fill="#eee"/><rect x="1" y="15" width="26" height="13" rx="6.500" fill="#eee"/><circle cx="20" cy="21.500" r="4" fill="#3e4034"/></svg>
      <time class="whitespace-pre">Tue 13 May  10:24</time>
    </div>
  </header>

  <!-- editor window -->
  <section class="absolute inset-x-0 top-[50px] bottom-[120px] flex flex-col overflow-hidden rounded-[20px] bg-white" aria-label="Editor">
    <div class="flex h-[70px] shrink-0 items-center justify-between bg-[#e4e4e4] pl-[22px] pr-8">
      <div class="flex gap-4"><i class="size-6 rounded-full border border-[#bdbdbd] bg-[#d4d4d4]"></i><i class="size-6 rounded-full border border-[#bdbdbd] bg-[#d4d4d4]"></i><i class="size-6 rounded-full border border-[#bdbdbd] bg-[#d4d4d4]"></i></div>
      <div class="ml-[114px] h-12 w-[1096px] rounded-xl border-2 border-[#b7b7b7] bg-[#d0d0d0]"></div>
      <div class="flex gap-6">
        <svg class="size-7" viewBox="0 0 28 28" fill="none" stroke="#777" stroke-width="2"><path d="M2 2h9v9H2zM17 2h9v9h-9z"/></svg>
        <svg class="size-7" viewBox="0 0 28 28"><rect x="1" y="1" width="26" height="26" rx="3" fill="none" stroke="#666" stroke-width="2"/><path d="M1 1h9v26H1z" fill="#666"/></svg>
        <svg class="size-7" viewBox="0 0 28 28"><rect x="1" y="1" width="26" height="26" rx="3" fill="none" stroke="#777" stroke-width="2"/><path d="M1 17h26v10H1z" fill="#777"/></svg>
        <svg class="size-7" viewBox="0 0 28 28"><rect x="1" y="1" width="26" height="26" rx="3" fill="none" stroke="#888" stroke-width="2"/><path d="M17 1v26" stroke="#888" stroke-width="2"/></svg>
      </div>
    </div>
    <div class="flex min-h-0 flex-1">
      <nav class="flex w-24 shrink-0 flex-col bg-[#2c2c2c] text-[#858585]" aria-label="Activity bar">
        <button class="grid h-24 place-items-center border-l-4 border-white pr-1" aria-label="Explorer"><svg class="size-12" viewBox="0 0 48 48" fill="none" stroke="#fff" stroke-width="3"><path d="M18 2h17l9 9v23H18zM34 2v10h10M18 14H6q-2 0-2 2v28q0 2 2 2h22q2 0 2-2V35"/></svg></button>
        <button class="grid h-24 place-items-center" aria-label="Search"><svg class="size-12" viewBox="0 0 48 48" fill="none" stroke="currentColor" stroke-width="3"><circle cx="29" cy="18" r="15"/><path d="M18 29L3 46"/></svg></button>
        <button class="relative grid h-24 place-items-center" aria-label="Source control"><svg class="size-12" viewBox="0 0 48 48" fill="none" stroke="currentColor" stroke-width="3"><circle cx="13" cy="7" r="6"/><circle cx="34" cy="16" r="6"/><circle cx="13" cy="41" r="6"/><path d="M13 13v22M34 22q0 7-8 7-10 0-13 6"/></svg><span class="absolute left-12 top-12 grid size-8 place-items-center rounded-full bg-[#2f77c0] text-lg font-bold text-white">6</span></button>
        <button class="grid h-24 place-items-center" aria-label="Run and debug"><svg class="size-12" viewBox="0 0 48 48" fill="none" stroke="currentColor" stroke-width="3"><path d="M17 22V2l30 20-20 13"/><circle cx="12" cy="36" r="8"/><path d="M5 35h14M12 28v16M1 27l5 4M23 27l-5 4M0 37h4M20 37h4M1 47l5-4M23 47l-5-4"/></svg></button>
        <button class="relative grid h-24 place-items-center" aria-label="Extensions"><svg class="size-12" viewBox="0 0 48 48" fill="none" stroke="currentColor" stroke-width="3"><path d="M21 28V12Q21 10 19 10H4Q2 10 2 12V44Q2 46 4 46H36Q38 46 38 44V30Q38 28 36 28H2M21 28V46"/><rect x="29" y="2" width="18" height="18" rx="2"/></svg><span class="absolute left-12 top-12 grid size-8 place-items-center rounded-full bg-[#2f77c0] text-lg font-bold text-white">5</span></button>
        <button class="grid h-24 place-items-center" aria-label="Remote explorer"><svg class="size-12" viewBox="0 0 48 48" fill="none" stroke="currentColor" stroke-width="3"><path d="M22 37H2V4h43v17M10 42h11"/><circle cx="35" cy="34" r="12"/><path d="M29 31l4 4-4 4M41 29l-4 4 4 4" stroke-width="2"/></svg></button>
        <button class="grid h-24 place-items-center" aria-label="API client"><svg class="size-12" viewBox="0 0 48 48"><rect x="1.500" y="4.500" width="45" height="40" rx="2" fill="none" stroke="currentColor" stroke-width="3"/><path d="M2 4h44v8H2z" fill="currentColor"/><path d="M31 8h3M36 8h3M41 8h3" stroke="#2c2c2c" stroke-width="2"/><text x="6" y="34" font-size="17" font-weight="700" fill="currentColor" font-family="Inter">/API</text></svg></button>
        <button class="grid h-24 place-items-center" aria-label="Containers"><svg class="size-12" viewBox="0 0 48 48" fill="currentColor"><path d="M0 26h34q3-1 3-4-2-4 0-6 4 2 4 5 4-1 7 1-2 4-8 4-5 18-24 18Q1 44 0 26zM4 19h5v5H4zM10 19h5v5h-5zM16 19h5v5h-5zM22 19h5v5h-5zM28 19h5v5h-5zM10 13h5v5h-5zM16 13h5v5h-5zM22 13h5v5h-5zM22 7h5v5h-5z"/></svg></button>
        <button class="mt-auto grid h-24 place-items-center" aria-label="Accounts"><svg class="size-12" viewBox="0 0 48 48" fill="none" stroke="currentColor" stroke-width="3"><circle cx="24" cy="24" r="22"/><circle cx="24" cy="19" r="10"/><path d="M10 41q2-12 14-12t14 12"/></svg></button>
        <button class="relative grid h-24 place-items-center" aria-label="Manage"><svg class="size-12" viewBox="0 0 48 48" fill="none" stroke="currentColor" stroke-width="3"><circle cx="24" cy="24" r="5"/><path d="M20 2h8l1 7 5 2 6-4 5 6-4 5 2 5 5 1v6l-7 1-2 5 4 6-6 5-5-4-5 2-1 3h-6l-1-6-5-2-6 4-5-6 4-5-2-5-5-1v-7l7-1 2-5-4-6 6-5 5 4 5-2z"/></svg><span class="absolute left-12 top-12 grid size-8 place-items-center rounded-full bg-[#2f77c0] text-lg font-bold text-white">1</span></button>
      </nav>
      <aside class="flex w-[842px] shrink-0 flex-col bg-[#ececec]">
        <svg class="ml-2.5 mt-[82px] size-6" viewBox="0 0 24 24" fill="none" stroke="#444" stroke-width="2"><path d="M1 7l10 10L21 7"/></svg>
        <button class="mt-auto flex h-11 items-center gap-1 border-t-2 border-[#c4c4c4] pl-2 text-[22px] font-bold text-[#4a4a4a]"><svg class="size-7" viewBox="0 0 28 28" fill="none" stroke="#444" stroke-width="2"><path d="M9 5l9 9-9 9"/></svg>OUTLINE</button>
        <button class="flex h-11 items-center gap-1 border-t-2 border-[#c4c4c4] pl-2 text-[22px] font-bold text-[#4a4a4a]"><svg class="size-7" viewBox="0 0 28 28" fill="none" stroke="#444" stroke-width="2"><path d="M9 5l9 9-9 9"/></svg>TIMELINE</button>
      </aside>
      <main class="flex min-w-0 flex-1 flex-col">
        <div class="flex h-[70px] shrink-0 items-center justify-end gap-6 bg-[#f1f1f1] pr-[34px]">
          <svg class="size-[26px]" viewBox="0 0 26 26" fill="none" stroke="#333" stroke-width="2"><rect x="1" y="1" width="24" height="24" rx="2"/><path d="M13 1v24"/></svg>
          <svg class="size-[26px]" viewBox="0 0 26 26" fill="#444"><circle cx="3" cy="13" r="2.500"/><circle cx="13" cy="13" r="2.500"/><circle cx="23" cy="13" r="2.500"/></svg>
        </div>
        <div class="flex min-h-0 flex-1 justify-end pt-[44px]">
          <div class="w-24 shrink-0 overflow-hidden whitespace-pre border-t-4 border-[#9dbff5] font-['Liberation_Mono',monospace] text-[3px] font-bold leading-[4px] text-black"><p class="mt-1 bg-[#9dbff5] py-px text-[#24406e]">OS) software that is free and
s viewing, editing, printing, and
ia).</p><p class="mt-5">browser panel).</p><p class="mt-3">using the landing page url and testing
these reasons?:</p><p class="mt-3">ections/WMS): <span class="text-[#a31515]">```  `OGAMS-Org`</span>.</p><p class="mt-3">a layer to bring up the context menu and</p><p class="mt-4">pdown menu on <span class="text-[#a31515]">`color`</span>, select the field
nd <span class="text-[#a31515]">`ok`</span> to close the dialogue.</p></div>
          <svg class="w-7 h-full shrink-0 border-l border-[#e6e6e6]" aria-hidden="true"><path d="M18 0h9v17h-9zM18 35h9v54h-9z" fill="#3b86f7"/><path d="M0 409h10v198H0zM0 624h10v18H0z" fill="#86b9dc"/><path d="M0 588h28" stroke="#333" stroke-width="3"/></svg>
        </div>
        <div class="flex h-[161px] shrink-0 justify-end gap-6 border-t-2 border-[#d0d0d0] pr-6 pt-5">
          <svg class="size-7" viewBox="0 0 28 28" fill="none" stroke="#444" stroke-width="2"><path d="M5 19l9-9 9 9"/></svg>
          <svg class="size-7" viewBox="0 0 28 28" fill="none" stroke="#333" stroke-width="2"><path d="M6 6l16 16M22 6L6 22"/></svg>
        </div>
      </main>
    </div>
    <footer class="flex h-11 shrink-0 items-center bg-linear-to-r from-[#2f74c0] via-[#2a6bb2] to-[#2f74c0] text-2xl text-[#f0f0f0]">
      <button class="grid h-11 w-[68px] place-items-center bg-[#3c815c]" aria-label="Remote window"><svg class="size-6" viewBox="0 0 24 24" fill="none" stroke="#fff" stroke-width="2"><path d="M4 6l6 7-6 7M20 2l-6 7 6 7"/></svg></button>
      <button class="ml-3.5 flex items-center gap-2"><svg class="w-6 h-7" viewBox="0 0 24 28" fill="none" stroke="#fff" stroke-width="2"><circle cx="6" cy="5" r="4"/><circle cx="6" cy="23" r="4"/><circle cx="18" cy="9" r="4"/><path d="M6 9v10M18 13q0 4-6 4-5 0-6 3"/></svg>master*</button>
      <svg class="ml-3.5 w-6 h-6" viewBox="0 0 24 24" fill="none" stroke="#fff" stroke-width="2"><path d="M7 18H6a5 5 0 0 1 0-10 7 7 0 0 1 13 1 4.500 4.500 0 0 1 0 9h-2M12 24V12M8 15l4-4 4 4"/></svg>
      <button class="ml-8 flex items-center gap-2.5"><svg class="size-6" viewBox="0 0 24 24" fill="none" stroke="#fff" stroke-width="2"><circle cx="12" cy="12" r="11"/><path d="M8 8l8 8M16 8l-8 8"/></svg>0<svg class="size-6" viewBox="0 0 24 24" fill="none" stroke="#fff" stroke-width="2"><path d="M12 2l11 20H1zM12 9v7M12 18v2"/></svg>0<svg class="size-6" viewBox="0 0 24 24" fill="none" stroke="#fff" stroke-width="2"><circle cx="12" cy="12" r="11"/><path d="M12 6v2M12 10v8"/></svg>13</button>
      <div class="ml-auto flex items-center gap-[30px] pr-[30px]">
        <button>Ln 29, Col 20</button><button>Spaces: 4</button><button>UTF-8</button><button>LF</button><button class="flex gap-4"><span>{}</span>Markdown</button>
        <svg class="size-7" viewBox="0 0 28 28" fill="none" stroke="#eee" stroke-width="3"><rect x="5" y="2" width="8" height="9" rx="3"/><rect x="15" y="2" width="8" height="9" rx="3"/><path d="M4 12q-3 2-2 8 12 11 24 0 1-6-2-8M11 16v5M17 16v5"/></svg>
        <svg class="size-8" viewBox="0 0 32 32"><path d="M16 0l14 8v16l-14 8L2 24V8z" fill="#eee"/><path d="M12 8q6-3 8 1-1 4-6 6h6M10 14l-4 8h8M11 18v8M25 20q-5-2-6 2 1 4 6 2" fill="none" stroke="#2b6db4" stroke-width="2"/></svg>
        <svg class="size-7" viewBox="0 0 28 28" fill="none" stroke="#eee" stroke-width="2"><path d="M4 22l3-5V11a7 7 0 0 1 14 0v6l3 5zM11 23q3 5 6 0"/></svg>
      </div>
    </footer>
  </section>

  <!-- background window -->
  <div class="absolute left-24 top-[273px] bottom-[284px] w-[600px] overflow-hidden rounded-[20px] border border-[#b4b4b8] bg-[#ebebeb]"><div class="h-20 bg-[#cdcdd6]"></div></div>

  <!-- main GIS window -->
  <section class="absolute left-[130px] right-[1800px] top-[102px] bottom-[258px] flex flex-col overflow-hidden rounded-[20px] bg-[#ececec] shadow-[0_16px_50px_rgba(0,0,0,0.55)]" aria-label="Project">
    <div class="flex h-[57px] shrink-0 items-center gap-4 border-b-2 border-[#d0d0cc] bg-[#f0f0ee] pl-4"><i class="size-6 rounded-full border border-[#bdbdbd] bg-[#d4d4d4]"></i><i class="size-6 rounded-full border border-[#bdbdbd] bg-[#d4d4d4]"></i><i class="size-6 rounded-full border border-[#bdbdbd] bg-[#d4d4d4]"></i></div>
    <div id="toolbars" class="flex shrink-0 flex-col"></div>
    <div class="flex min-h-0 flex-1">
      <aside class="flex w-[386px] shrink-0 flex-col">
        <div class="flex h-[46px] items-center pl-[9px] pr-1">
          <h2 class="text-[21px]">Layers</h2>
          <button class="ml-auto" aria-label="Float panel"><svg class="size-6" viewBox="0 0 24 24" fill="none" stroke="#666" stroke-width="2"><rect x="1" y="1" width="22" height="22" rx="4"/><rect x="5" y="9" width="9" height="9"/><path d="M10 9V5h9v9h-5"/></svg></button>
          <button class="ml-1" aria-label="Close panel"><svg class="size-6" viewBox="0 0 24 24" fill="none" stroke="#666" stroke-width="2"><rect x="1" y="1" width="22" height="22" rx="4"/><path d="M6 6l12 12M18 6L6 18" stroke-width="4"/></svg></button>
        </div>
        <div class="flex h-[58px] items-center gap-[18px] pb-1 pl-4">
          <svg class="size-8"><use href="#n-sym"/></svg>
          <svg class="size-8" viewBox="0 0 32 32" fill="none" stroke="#666" stroke-width="2"><path d="M3 12v18h18M8 8v17h14M13 4h14v16H13z"/><path d="M18 0v16" stroke="#33608f" stroke-width="3"/><use href="#plus" x="18" y="18" width="13" height="13" stroke="none"/></svg>
          <svg class="w-9 h-8" viewBox="0 0 36 32"><path d="M1 15Q16 1 31 15 16 27 1 15z" fill="#fff" stroke="#666" stroke-width="1.500"/><circle cx="16" cy="14" r="7.500" fill="#6d9bd1" stroke="#2b4f7c"/><circle cx="16" cy="14" r="3" fill="#111"/><path d="M3 7Q16-3 30 8" fill="none" stroke="#888"/><path d="M23 26h13l-6 6z" fill="#555"/></svg>
          <svg class="-ml-1 w-9 h-8" viewBox="0 0 36 32"><path d="M2 1h27v5H2z" fill="#fce94f" stroke="#a08000"/><path d="M2 6h27L19 18v14l-6-3V18z" fill="#6d9bd1" stroke="#33608f"/><path d="M24 26h12l-6 6z" fill="#555"/></svg>
          <svg class="-ml-1 w-8 h-8" viewBox="0 0 32 32"><path d="M14 4C12-1 3 1 4 5c0 3 3 4 6 4-9 1-9 8-4 9 4 1 8-1 9-4" fill="none" stroke="#5c2d6e" stroke-width="3"/><path d="M15 16h15v14h-5V20h-5v10h-5z" fill="#bbb" stroke="#888"/></svg>
          <svg class="-ml-2 h-2.5 w-4"><use href="#tri"/></svg>
          <svg class="-ml-1 w-8 h-8" viewBox="0 0 32 32"><path d="M1 3h28M5 3v24h6M5 12h6" stroke="#777" stroke-width="2" fill="none"/><path d="M9 9h6v6H9zM9 22h6v6H9z" fill="#ffd400" stroke="#f57900" stroke-width="2"/><path d="M18 1h7v17h6L21 30 12 18h6z" fill="#6d9bd1" stroke="#2b4f7c"/></svg>
          <svg class="ml-auto mr-2 size-4" viewBox="0 0 16 16" fill="none" stroke="#333" stroke-width="2"><path d="M1 2l6 6-6 6M9 2l6 6-6 6"/></svg>
        </div>
        <ul class="flex flex-1 flex-col border border-[#b4b4b4] bg-white pt-px text-[26px] font-bold">
          <li class="flex h-9 items-center bg-[#dcdcdc] pl-3.5"><svg class="mr-[23px] w-2.5 h-4" viewBox="0 0 10 16"><path d="M1 0v16l9-8z" fill="#4a4a4a"/></svg><label class="flex items-center"><span class="grid size-7 *:col-start-1 *:row-start-1"><input type="checkbox" checked class="size-7 appearance-none border-2 border-[#b4b4b4] bg-white"><svg class="pointer-events-none size-7"><use href="#check"/></svg></span><svg class="ml-4 mr-3 size-7" viewBox="0 0 28 28" fill="none" stroke="#888" stroke-width="2"><circle cx="4" cy="24" r="2"/><circle cx="8" cy="10" r="2"/><circle cx="22" cy="4" r="2"/></svg><span class="text-black underline decoration-2 underline-offset-4">W01</span></label></li>
          <li class="flex h-9 items-center pl-3"><svg class="mr-[19px] h-2.5 w-4"><use href="#tri"/></svg><label class="flex items-center"><span class="grid size-7 *:col-start-1 *:row-start-1"><input type="checkbox" checked class="size-7 appearance-none border-2 border-[#b4b4b4] bg-white"><svg class="pointer-events-none size-7"><use href="#check"/></svg></span><svg class="ml-4 mr-3 size-7" viewBox="0 0 27 27"><path d="M0 0h27v27H0z" fill="#b3cbe8"/><path d="M0 0h9v9H0zM18 0h9v9h-9zM9 9h9v9H9zM0 18h9v9H0z" fill="#26374f"/><path d="M18 18h9v9h-9z" fill="#eef3fa"/></svg>OSM Standard</label></li>
        </ul>
      </aside>
      <div class="grid w-3 place-items-center text-[#999]"><svg class="h-10 w-1"><path d="M2 0v40" stroke="#aaa" stroke-width="2" stroke-dasharray="2 4"/></svg></div>
      <svg id="map" class="min-w-0 flex-1 border border-[#b4b4b4] bg-[#efece4]" font-family="Noto Sans CJK SC" font-size="14" fill="#444"><g transform="translate(-528 -392)">
        <path d="M528 789l12-13 12-22 14-12 60-6v240l-30-3-14-10-16 6-14-8-24 3zM528 1085l12-5 20-22 20-24 50-10v330l-35-18-32-26-5-44-14-36-16-20z" fill="#a6cdd8"/>
        <path d="M572 850l24-20v50l-20 10 3-14 17-10z" fill="#eee9dc"/>
        <g fill="none" stroke="#e8909a" stroke-width="1.500"><path d="M528 425l20 8 8 14 30 20M528 535l30-3 38 10M528 562l20 14 20 12 28 14M552 603l12-36 32-24M552 603l-24 10M530 684l24-10 40-24M570 744l10-50-8-60M528 762h30l10-22M535 800l10-30M540 975l-4 40M536 1020l14 10 40-25M536 1060l2-30 30-10M528 985l30-8 38 14M528 1295l30-2v20M528 1330l30-10 14-20 20 30M528 1365l20 10 48 6M540 1370l8 30-14 40 20 30M560 1380l20 50-10 40M528 1412h68M528 1440l30-10 38-14M584 1372l-8 40 10 30M530 1462l40-4 26 8M528 1475l20-8 40-4M574 1390l22 30M566 1410l30-20M560 1420h36M570 1400h26M570 1376v60M580 1370v70M590 1376v60M562 1392h34M564 1410h32M562 1430h34M528 1350l16 8-4 30"/></g>
        <g fill="none" stroke="#aa9fbd" stroke-width="2"><path d="M528 660l30-16 22-12 16-6M530 805l40-40 26-14M596 808l-32 40-14 36 14 34 30-2M528 930l24-22 10-4M586 905l-16 12 4 30 22 24M528 1144l40-42 28-22M528 1160l68 92"/></g>
        <path d="M530 530h9v12h-9zM560 1020l20-12v16z" fill="#c8e0b4"/>
        <path d="M556 1360l14 20 26 14v6l-30-10zM528 1400l10 12-10 14zM548 1450l26 20 22-30v20l-20 14h-20z" fill="#a6cdd8"/>
        <g fill="#fff" stroke="#777"><circle cx="560" cy="458" r="2.500"/><circle cx="547" cy="590" r="2.500"/><circle cx="553" cy="668" r="2.500"/><circle cx="535" cy="685" r="3.500"/><circle cx="580" cy="687" r="2.500"/><circle cx="573" cy="720" r="3.500"/><circle cx="551" cy="756" r="2.500"/><circle cx="557" cy="959" r="2.500"/><circle cx="591" cy="983" r="3.500"/><circle cx="540" cy="1024" r="2.500"/><circle cx="533" cy="1079" r="3.500"/><circle cx="536" cy="1317" r="2.500"/><circle cx="561" cy="1353" r="3.500"/><circle cx="546" cy="1397" r="3.500"/><circle cx="563" cy="1448" r="2.500"/></g>
        <g stroke="#f4f1ea" stroke-width="2" paint-order="stroke"><text x="567" y="455" font-size="12">扎鲁特旗</text><text x="530" y="468" font-size="12">尔</text><text x="581" y="551">通辽</text><text x="530" y="566" font-size="12">奈曼旗</text><text x="581" y="646">阜新</text><text x="535" y="664" font-size="12">北票市</text><text x="530" y="705">阳市</text><text x="568" y="705" font-size="12">义县</text><text x="551" y="740">锦州市</text><text x="532" y="773" font-size="12">兴城市</text><text x="579" y="873">大连</text><text x="539" y="954" font-size="12">蓬莱区</text><text x="541" y="989">烟台市</text><text x="523" y="1019" font-size="12">莱西市</text><text x="581" y="1041" font-size="12">海阳</text><text x="530" y="1072">岛市</text><text x="530" y="1256" font-size="12">市</text><text x="521" y="1291" font-size="12">台市</text><text x="541" y="1322" font-size="12">海安市</text><text x="539" y="1346">南通市</text><text x="524" y="1390">苏州市</text><text x="522" y="1430">湖州市</text><text x="569" y="1453" font-size="12">海盐县</text><text x="530" y="1459">市</text><text x="580" y="1480">宁波</text></g>
      </g></svg>
    </div>
    <div class="flex h-[62px] shrink-0 items-center pl-2">
      <label class="flex h-12 w-[428px] items-center rounded-[5px] border-2 border-[#a9a9a9] bg-white pl-3.5 text-[#8a8a8a]"><svg class="mr-4 size-[26px]"><use href="#mag"/></svg><input type="text" placeholder="Type to locate (⌘K)" aria-label="Type to locate" class="w-[340px] outline-none placeholder:text-[#808080]"></label>
    </div>
  </section>

  <!-- layer properties dialog -->
  <section role="dialog" aria-labelledby="dlg-title" class="absolute left-[596px] right-[124px] top-[76px] bottom-[208px] flex flex-col overflow-hidden rounded-[20px] bg-[#ececec] shadow-[0_0_2px_rgba(0,0,0,0.6),0_28px_70px_rgba(0,0,0,0.6)]">
    <div class="relative flex h-[57px] shrink-0 items-center border-b-2 border-[#cfcfcb] bg-[#f0f0ee] pl-4">
      <div class="flex gap-4"><button class="size-6 rounded-full border border-[#d65a50] bg-[#ed6a5e]" aria-label="Close"></button><button class="size-6 rounded-full border border-[#c4c4c4] bg-[#d5d5d3]" aria-label="Minimise"></button><button class="size-6 rounded-full border border-[#53ab46] bg-[#61c454]" aria-label="Zoom"></button></div>
      <h1 id="dlg-title" class="absolute inset-x-0 text-center text-[26px] font-bold text-[#444]">Layer Properties - W01 — Symbology</h1>
    </div>
    <div class="flex min-h-0 flex-1">
      <aside class="flex w-[300px] shrink-0 flex-col bg-[#5b5b5b]">
        <label class="flex h-12 shrink-0 items-center border-2 border-[#b0b0b0] bg-white pl-3.5 text-[#999]"><svg class="size-[26px]"><use href="#mag"/></svg><input type="search" aria-label="Search options" class="w-[220px] outline-none"></label>
        <div class="flex min-h-0 flex-1 pt-[11px]">
          <ul id="nav" class="w-[272px] shrink-0 overflow-hidden text-2xl leading-[29px] text-white"></ul>
          <div class="flex flex-1 flex-col border-l border-[#b8b8b8] bg-linear-to-r from-white to-[#e8e8e8]">
            <button class="grid h-[27px] place-items-center border-b-2 border-[#c4c4c4]" aria-label="Scroll up"><svg class="h-2.5 w-4 rotate-180"><use href="#tri"/></svg></button>
            <div class="mt-auto h-[184px] border-y-2 border-[#bcbcbc] bg-[#e1e1e1]"></div>
            <button class="grid h-[27px] place-items-center bg-[#f6f6f6]" aria-label="Scroll down"><svg class="h-2.5 w-4"><use href="#tri"/></svg></button>
          </div>
        </div>
      </aside>
      <div class="flex min-w-0 flex-1 flex-col pb-1.5 pl-2 pr-1.5 pt-[5px]">
        <div class="relative h-12 shrink-0">
          <select aria-label="Symbology type" class="h-12 w-full appearance-none rounded-[5px] border-2 border-[#a9a9a9] bg-linear-to-b from-white to-[#ebebeb] pl-12 text-black"><option>Categorized</option></select>
          <svg class="pointer-events-none absolute left-4 top-2 size-8" viewBox="0 0 32 32" stroke-width="2"><path d="M1 3h20v6H1z" fill="#0cb0c0" stroke="#0a46c0"/><path d="M5 13h20v6H5z" fill="#0cb860" stroke="#045a28"/><path d="M1 23h20v6H1z" fill="#c01010" stroke="#600000"/></svg>
          <svg class="pointer-events-none absolute right-3.5 top-5 h-2.5 w-4"><use href="#tri"/></svg>
        </div>
        <div class="mt-3 flex h-12 shrink-0 items-center">
          <label for="value" class="w-[148px]">Value</label>
          <div class="flex h-12 min-w-0 flex-1 items-center overflow-hidden rounded-[5px] border-2 border-[#a9a9a9] bg-white"><span class="ml-[7px] w-[39px] text-[16px] font-bold text-[#666]">abc</span><input id="value" type="text" value="w01_001" class="min-w-0 flex-1 outline-none"><button class="grid h-full w-10 place-items-center border-l border-[#a9a9a9] bg-linear-to-b from-white to-[#ebebeb]" aria-label="Choose field"><svg class="h-2.5 w-4"><use href="#tri"/></svg></button></div>
          <button class="ml-3 grid size-12 place-items-center rounded-[5px] border-2 border-[#a9a9a9] bg-linear-to-b from-white to-[#ebebeb]" aria-label="Expression"><svg class="size-8"><use href="#n-var"/></svg></button>
        </div>
        <div class="mt-3 flex h-[132px] shrink-0 items-center">
          <span class="w-[148px]">Symbol</span>
          <button class="grid h-full w-[174px] place-items-center rounded-[5px] border-2 border-[#a9a9a9] bg-linear-to-b from-white to-[#ebebeb]" aria-label="Change symbol"><i class="size-[21px] rounded-full border border-[#3f3a2e] bg-[#e3b132]"></i></button>
          <button class="grid h-full w-6 place-items-center rounded-[5px] border-2 border-[#a9a9a9] bg-linear-to-b from-white to-[#ebebeb]" aria-label="Symbol menu"><svg class="h-2.5 w-4"><use href="#tri"/></svg></button>
        </div>
        <div class="mt-3 flex h-14 shrink-0 items-center">
          <span class="w-[148px] whitespace-nowrap">Color ramp</span>
          <button class="h-full flex-1 rounded-[5px] border-2 border-[#a9a9a9] bg-linear-to-b from-white to-[#ebebeb] text-black">Random colors</button>
          <button class="grid h-full w-6 place-items-center rounded-[5px] border-2 border-[#a9a9a9] bg-linear-to-b from-white to-[#ebebeb]" aria-label="Color ramp menu"><svg class="h-2.5 w-4"><use href="#tri"/></svg></button>
        </div>
        <div class="mt-3 flex min-h-0 flex-1 border-2 border-[#b8b8b8] bg-white">
          <div class="min-w-0 flex-1 overflow-hidden">
            <table class="w-full table-fixed border-collapse text-left">
              <thead class="text-[21px] leading-6 text-black"><tr class="h-[32px] border-b-2 border-[#a9a9a9] bg-linear-to-b from-[#fafafa] to-[#e6e6e6]"><th class="w-[130px] border-r-2 border-[#c4c4c4] py-0 pl-1 font-normal"><span class="flex items-center justify-between pr-[5px]">Symbol<svg class="h-2.5 w-4"><use href="#tri"/></svg></span></th><th class="w-[198px] border-r-2 border-[#c4c4c4] py-0 pl-[5px] font-normal">Value</th><th class="py-0 pl-[5px] font-normal">Legend</th></tr></thead>
              <tbody id="rows" class="text-2xl leading-[34px]"></tbody>
            </table>
          </div>
          <div class="flex w-[29px] flex-col border-l-2 border-[#b8b8b8] bg-[#e1e1e1]">
            <button class="grid h-[26px] place-items-center border-b-2 border-[#c0c0c0] bg-[#f6f6f6]" aria-label="Scroll list up"><svg class="h-2.5 w-4 rotate-180"><use href="#tri"/></svg></button>
            <div class="h-[54px] border-b-2 border-[#b8b8b8] bg-linear-to-r from-white to-[#ececec]"></div>
            <button class="mt-auto grid h-[28px] place-items-center border-t-2 border-[#b8b8b8] bg-[#f6f6f6]" aria-label="Scroll list down"><svg class="h-2.5 w-4"><use href="#tri"/></svg></button>
          </div>
        </div>
        <div class="mt-3.5 flex h-12 shrink-0 gap-3 text-black">
          <button class="w-40 rounded-[5px] border-2 border-[#5b9ee6] bg-linear-to-b from-white to-[#e2e6ee]">Classify</button>
          <button class="grid w-14 place-items-center rounded-[5px] border-2 border-[#a9a9a9] bg-linear-to-b from-white to-[#ebebeb]" aria-label="Add"><svg class="size-[30px]" viewBox="0 0 30 30"><path d="M10 2h10v8h9v9h-9v9H10v-9H1v-9h9z" fill="#fff" stroke="#5a8c5a" stroke-width="2"/><path d="M15 5v20M4 14.500h22" stroke="#5a8c5a" stroke-width="4"/></svg></button>
          <button class="grid w-14 place-items-center rounded-[5px] border-2 border-[#a9a9a9] bg-linear-to-b from-white to-[#ebebeb]" aria-label="Remove"><svg class="size-[30px]" viewBox="0 0 30 30"><path d="M1 9h28v11H1z" fill="#fff" stroke="#ef5350" stroke-width="2"/><path d="M5 14.500h20" stroke="#ef5350" stroke-width="4"/></svg></button>
          <button class="w-40 rounded-[5px] border-2 border-[#a9a9a9] bg-linear-to-b from-white to-[#ebebeb]">Delete All</button>
          <button class="ml-auto flex w-40 items-center justify-between rounded-[5px] border-2 border-[#a9a9a9] bg-linear-to-b from-white to-[#ebebeb] px-1.5">Advanced<svg class="h-2 w-3"><use href="#tri"/></svg></button>
        </div>
        <button class="flex h-[60px] shrink-0 items-center gap-[18px] pl-2.5 text-[26px] font-bold"><svg class="h-5 w-4" viewBox="0 0 16 20"><path d="M1 1v18l14-9z" fill="#555" stroke="#222" stroke-width="2"/></svg>Layer Rendering</button>
        <div class="flex h-12 shrink-0 gap-3 text-black">
          <button class="w-40 rounded-[5px] border-2 border-[#a9a9a9] bg-linear-to-b from-white to-[#ebebeb]">Help</button>
          <button class="flex w-40 items-center justify-end gap-10 rounded-[5px] border-2 border-[#a9a9a9] bg-linear-to-b from-white to-[#ebebeb] pr-2">Style<svg class="h-2 w-3"><use href="#tri"/></svg></button>
          <button class="w-40 rounded-[5px] border-2 border-[#a9a9a9] bg-linear-to-b from-white to-[#ebebeb]">Apply</button>
          <button class="ml-auto w-40 rounded-[5px] border-2 border-[#a9a9a9] bg-linear-to-b from-white to-[#ebebeb]">Cancel</button>
          <button class="w-40 rounded-[5px] border-2 border-[#a9a9a9] bg-linear-to-b from-white to-[#ebebeb]">OK</button>
        </div>
      </div>
    </div>
  </section>

  <!-- tooltip -->
  <div role="tooltip" class="absolute right-[692px] top-[1140px] border-2 border-[#222] bg-white px-2 py-1 text-[20px] leading-7 shadow-[0_12px_36px_rgba(0,0,0,0.35)]">七ヶ宿</div>

  <!-- dock -->
  <nav id="dock" aria-label="Dock" class="absolute inset-x-[54px] bottom-2.5 flex h-[88px] rounded-[24px] border-2 border-white/25 bg-[linear-gradient(90deg,#646c55,#69765e_12%,#66756a_28%,#728360_40%,#6b655c_51%,#6d6258_66%,#667069_76%,#69736b_83%,#8f8067_88%,#6c6c64_93%,#5f6661)] px-0.5"></nav>
</div>

<script>
const svg = (id, cls) => `<svg class="${cls}"><use href="#${id}"/></svg>`;

// wallpaper foliage
let seed = 7;
const rnd = () => (seed = (seed * 16807) % 2147483647) / 2147483647;
let leaves = '';
for (let i = 0; i < 900; i++) {
  const x = rnd() * 2880, y = rnd() < 0.9 ? 1660 + rnd() * 140 : 44 + rnd() * 40;
  const trunk = (x > 1350 && x < 1950) || (x > 2490 && x < 2650);
  const color = trunk ? ['#3a281d', '#0b0807', '#33231a'][i % 3] : ['#3c5220', '#4b6228', '#22331c', '#0e1712', '#2d4422'][i % 5];
  leaves += `<ellipse cx="${x | 0}" cy="${y | 0}" rx="${trunk ? 4 : 4 + rnd() * 8 | 0}" ry="${trunk ? 50 : 3 + rnd() * 5 | 0}" fill="${color}" fill-opacity=".4"/>`;
}
document.getElementById('leaves').innerHTML = leaves;

// dialog sections
const nav = [['n-info', 'Information'], ['n-source', 'Source'], ['n-sym', 'Symbology'], ['n-label', 'Labels'], ['n-mask', 'Masks'], ['n-3d', '3D View'], ['n-diag', 'Diagrams'], ['n-fields', 'Fields'], ['n-form', 'Attributes Form'], ['n-join', 'Joins'], ['n-aux', 'Auxiliary<br>Storage'], ['n-act', 'Actions'], ['n-disp', 'Display'], ['n-rend', 'Rendering'], ['n-temp', 'Temporal'], ['n-var', 'Variables'], ['n-elev', 'Elevation'], ['n-meta', 'Metadata'], ['n-dep', 'Dependencies'], ['n-leg', 'Legend']];
document.getElementById('nav').innerHTML = nav.map(([icon, label]) => {
  const cls = label === 'Symbology' ? 'flex h-[72px] w-full items-center gap-3.5 bg-[#ececec] pl-[13px] text-left text-[#242424]'
    : icon === 'n-aux' ? 'flex h-[76px] w-full items-center gap-3.5 pl-2 text-left'
    : 'flex h-[72px] w-full items-center gap-3.5 pl-2 text-left';
  return `<li><button class="${cls}">${svg(icon, 'size-[52px] shrink-0')}<span class="whitespace-nowrap">${label}</span></button></li>`;
}).join('');

// category rows
const rows = [['エルム', '#22dbe6'], ['オドヤ堤', '#cd8f18'], ['クオーベツ', '#54e0be'], ['こまち', '#413bd2'], ['サンル', '#8f4fea'], ['しろがね', '#4f43cd'], ['ドコ堤', '#a35cd0'], ['ヌッパの沢', '#e9c843'], ['ペーパン', '#e61f3b'], ['ポンテシオ', '#5133e4'], ['レン滝', '#2dadd0'], ['一の沢', '#b32fd8'], ['一の渡', '#e6748d'], ['一丈木', '#7010dc'], ['一方井', '#cd8b76'], ['一盃森溜池', '#b5e154'], ['七ヶ宿', '#8c33cc'], ['七北田', '#e01f26'], ['万右ェ門溜池', '#d9ec7c'], ['三ツ森', '#33d05c'], ['三の沢第一', '#cf7b30'], ['三の沢第二', '#74d178'], ['三又', '#e2c92a'], ['三春', '#1757d0'], ['三渓', '#87c0de'], ['三石', '#2a50d0']];
document.getElementById('rows').innerHTML = rows.map(([name, color]) => `<tr class="h-9"><td class="p-0 pl-1.5"><span class="flex items-center gap-[18px]"><span class="grid size-7 *:col-start-1 *:row-start-1"><input type="checkbox" checked aria-label="${name}" class="size-7 appearance-none border-2 border-[#b4b4b4] bg-white"><svg class="pointer-events-none size-7"><use href="#check"/></svg></span><i class="size-[21px] rounded-full border border-[#333]" style="background:${color}"></i></span></td><td class="whitespace-nowrap p-0 pb-0.5 pl-[7px]">${name}</td><td class="whitespace-nowrap p-0 pb-0.5 pl-[7px]">${name}</td></tr>`).join('');

// GIS toolbars
const grip = '<svg class="mr-3.5 h-10 w-2.5 shrink-0"><path d="M2 0v40M8 0v40" stroke="#b4b4b4" stroke-width="2" stroke-dasharray="2 4"/></svg>';
const icon = id => svg(id, 'mr-5 size-[46px] shrink-0');
const drop = svg('tri', '-ml-2.5 mr-4 h-2.5 w-4 shrink-0');
document.getElementById('toolbars').innerHTML = [
  grip + ['t-new', 't-open', 't-save', 't-layout', 't-tool', 't-symb'].map(icon).join('') + grip,
  grip + ['t-layers', 't-globe', 't-vec', 't-feather', 't-chip', 't-mesh', 't-vecb'].map(icon).join(''),
  grip + ['t-sel', 't-rows', 't-desel'].map(i => icon(i) + drop).join('') + grip + icon('t-edit') + icon('t-msel') + drop
].map(t => `<div class="flex h-[76px] items-center overflow-hidden border-b-2 border-[#b4b4b4] bg-linear-to-b from-[#f6f6f6] to-[#e9e9e9] pl-2.5">${t}</div>`).join('');

// dock: [icon, running, badge, overlay]
const dock = [['finder', 1], ['launch'], ['safari'], ['mail', 1, '598'], ['maps', 1], ['msg'], ['photos'], ['face'], ['cal', 0, '6'], ['cont'], ['rem'], ['notes', 1], ['tv', 0, '1'], ['music'], ['pod'], ['key'], ['num'], ['pages'], ['store'], ['set', 0, '1'], null,
  ['code', 1], ['brave', 1], ['teams', 1], ['ppt', 1], ['term', 1], ['signal', 1], ['chrome', 1], ['excel', 1], ['discord', 1], ['qgis', 1], ['prev', 1], null, ['fold'], ['w-light', 0, 0, 'd-mail'], ['w-light', 0, 0, 'd-mail'], ['w-dark', 0, 0, 'd-term'], ['w-code', 0, 0, 'd-code'], ['w-black', 0, 0, 'd-discord'], ['w-code', 0, 0, 'd-code'], ['trash']];
document.getElementById('dock').innerHTML = dock.map(d => {
  if (!d) return '<span class="grid w-[31px] place-items-center"><i class="h-16 w-0.5 bg-black/50"></i></span>';
  const [name, run, badge, over] = d;
  const big = name === 'fold' || name === 'trash' || name === 'qgis';
  const size = over ? 'h-[42px] w-[62px]' : big ? 'size-[62px]' : 'size-[54px]';
  const pad = over ? 'relative flex flex-1 flex-col items-center pt-2.5' : big ? 'relative flex flex-1 flex-col items-center pt-2' : 'relative flex flex-1 flex-col items-center pt-3';
  return `<button class="${pad}" aria-label="${name}">${svg(over ? name : 'd-' + name, over ? 'size-[62px]' : size)}`
    + (badge ? `<span class="absolute right-0 top-1.5 grid h-[27px] min-w-[27px] place-items-center rounded-full bg-[#e2503f] px-0.5 text-sm leading-none text-white">${badge}</span>` : '')
    + (over ? svg(over, 'absolute bottom-4 right-0.5 size-5') : '')
    + (run ? '<i class="absolute bottom-0.5 size-2 rounded-full bg-black"></i>' : '') + '</button>';
}).join('');
</script>
</body>
</html>
